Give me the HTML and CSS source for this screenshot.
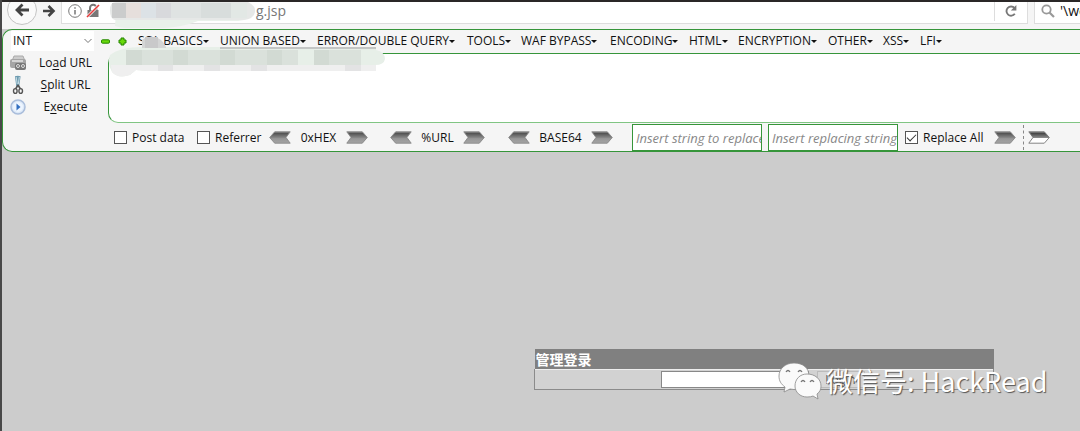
FILE: index.html
```html
<!DOCTYPE html>
<html lang="zh-CN">
<head>
<meta charset="utf-8">
<title>管理登录</title>
<link rel="stylesheet" href="styles.css">
</head>
<body>
<svg class="defs" width="0" height="0" aria-hidden="true">
  <defs>
    <linearGradient id="metal" x1="0" y1="0" x2="0" y2="1">
      <stop offset="0" stop-color="#8a8a8a"/><stop offset=".15" stop-color="#555"/><stop offset=".5" stop-color="#858585"/><stop offset=".6" stop-color="#979797"/><stop offset="1" stop-color="#a4a4a4"/>
    </linearGradient>
    <linearGradient id="half" x1="0" y1="0" x2="0" y2="1">
      <stop offset="0" stop-color="#888"/><stop offset=".15" stop-color="#484848"/><stop offset=".5" stop-color="#888"/><stop offset=".56" stop-color="#fff"/><stop offset="1" stop-color="#fff"/>
    </linearGradient>
    <symbol id="right" viewBox="0 0 22 13"><path d="M.8.8h15.5l5 5.700-5 5.700H.8l4.200-5.700z" fill="url(#metal)" stroke="#888" stroke-width=".9"/></symbol>
    <symbol id="left" viewBox="0 0 22 13"><path d="M21.200.8H5.700l-5 5.700 5 5.700h15.500L17 6.500z" fill="url(#metal)" stroke="#888" stroke-width=".9"/></symbol>
    <symbol id="right-half" viewBox="0 0 22 13"><path d="M.8.8h15.500l5 5.700-5 5.700H.8l4.200-5.700z" fill="url(#half)" stroke="#777" stroke-width=".9"/></symbol>
  </defs>
</svg>

<header class="browser">
  <nav class="nav">
    <button class="back" aria-label="Back"><svg width="16" height="16" viewBox="0 0 16 16"><path d="M15 8H3M8.500 2.500L3 8l5.500 5.500" fill="none" stroke="#444" stroke-width="2.800"/></svg></button>
    <button class="forward" aria-label="Forward"><svg width="14" height="14" viewBox="0 0 14 14"><path d="M1 7h10M6.500 2l5 5-5 5" fill="none" stroke="#444" stroke-width="2.600"/></svg></button>
    <div class="address">
      <svg class="info" width="14" height="14" viewBox="0 0 14 14"><circle cx="7" cy="7" r="6.300" fill="none" stroke="#777"/><path d="M7 6v4.500M7 3.300v1.500" stroke="#777" stroke-width="1.500"/></svg>
      <svg class="lock" width="14" height="16" viewBox="0 0 14 16"><path d="M4 8V5a3.200 3.200 0 0 1 6.400 0V8" fill="none" stroke="#777" stroke-width="2"/><path d="M1.500 7h11v7h-11z" fill="#777"/><path d="M1 14L13 2" stroke="#fff" stroke-width="3"/><path d="M1 14L13 2" stroke="#e33b3b" stroke-width="1.600"/></svg>
      <span class="url">g.jsp</span>
      <button class="reload" aria-label="Reload"><svg width="14" height="14" viewBox="0 0 14 14"><path d="M10.800 9.800A4.600 4.600 0 1 1 10.500 4" fill="none" stroke="#777" stroke-width="1.900"/><path d="M12.400 1v5.600H6.800z" fill="#777"/></svg></button>
    </div>
    <div class="search"><svg width="14" height="14" viewBox="0 0 14 14"><circle cx="5.500" cy="5.500" r="4.200" fill="none" stroke="#999" stroke-width="1.800"/><path d="M8.500 8.500l4.500 4.500" stroke="#999" stroke-width="2.200"/></svg><span>'\we</span></div>
  </nav>
  <svg class="mask-top" width="150" height="26" viewBox="0 0 150 26" aria-hidden="true">
    <path d="M8 10h138q-2 8-16 9H90q-20 8-45 7-25 2-38-2z" fill="#e9f1ea"/>
    <path d="M2 8Q2 0 8 0h132q8 4 7 10-1 7-12 8H7Q2 17 2 8" fill="#e6e8e7"/>
    <path d="M4 1h14v15H4z" fill="#cbcccc"/><path d="M18 1h15v15H18z" fill="#e6dfdc"/><path d="M33 1h15v15H33z" fill="#dce2e6"/><path d="M48 1h15v15H48z" fill="#d8d9dc"/><path d="M63 1h30v15H63z" fill="#dfe3e2"/><path d="M93 1h30v15H93z" fill="#d8dddc"/><path d="M123 1h16v15h-16z" fill="#e2e8e5"/>
  </svg>
</header>

<section class="hackbar">
  <div class="menubar">
    <select class="type" aria-label="Type"><option>INT</option></select>
    <svg class="chevron" width="8" height="6" viewBox="0 0 8 6"><path d="M.5 1L4 4.500 7.500 1" fill="none" stroke="#777"/></svg>
    <button class="minus" aria-label="Less"><svg width="9" height="9" viewBox="0 0 9 9"><rect x=".5" y="2.800" width="8" height="3.400" rx="1" fill="#68d80a" stroke="#248500"/></svg></button>
    <button class="plus" aria-label="More"><svg width="9" height="9" viewBox="0 0 9 9"><path d="M3 1h3v2h2v3H6v2H3V6H1V3h2z" fill="#68d80a" stroke="#248500" stroke-linejoin="round"/></svg></button>
    <div class="menus">
      <button>SQL BASICS</button><button>UNION BASED</button><button>ERROR/DOUBLE QUERY</button><button>TOOLS</button><button>WAF BYPASS</button><button>ENCODING</button><button>HTML</button><button>ENCRYPTION</button><button>OTHER</button><button>XSS</button><button>LFI</button>
    </div>
  </div>
  <div class="work">
    <div class="actions">
      <button><svg width="18" height="18" viewBox="0 0 18 18"><path d="M5 2h9l2 5H3z" fill="#ccc" stroke="#aaa"/><path d="M1 7q0-2 2-2h12q2 0 2 2v5q0 2-2 2H3q-2 0-2-2z" fill="#a5a5a5"/><path d="M3 6h11v2H3z" fill="#d5d5d5"/><rect x="6" y="9" width="11" height="7" rx="2" fill="#777"/><circle cx="9" cy="12" r="1.500" fill="none" stroke="#ddd"/><circle cx="14" cy="12" r="1.500" fill="none" stroke="#ddd"/></svg><span>Lo<u>a</u>d URL</span></button>
      <button><svg width="18" height="20" viewBox="0 0 18 20"><path d="M7.300 1l1.500 11M10.200 1L8.700 12" stroke="#6d9bb0" stroke-width="2.800"/><path d="M7.200 2l1 7M10.300 2l-1 7" stroke="#c4dbe4"/><path d="M9 10l-2.500 4M9 10l2.500 4" stroke="#555" stroke-width="1.500"/><ellipse cx="6.300" cy="16" rx="1.800" ry="2.400" fill="none" stroke="#555" stroke-width="1.400"/><ellipse cx="11.700" cy="16" rx="1.800" ry="2.400" fill="none" stroke="#555" stroke-width="1.400"/></svg><span><u>S</u>plit URL</span></button>
      <button><svg width="18" height="18" viewBox="0 0 18 18"><circle cx="9" cy="9" r="7" fill="#dce8f7" stroke="#a9bddb" stroke-width="1.500"/><circle cx="9" cy="9" r="5" fill="#edf5ff"/><path d="M7.500 5.500L11.500 9l-4 3.500z" fill="#326fc0"/></svg><span>E<u>x</u>ecute</span></button>
    </div>
    <div class="editor">
      <textarea aria-label="URL"></textarea>
      <div class="options">
        <label class="post"><input type="checkbox"><span>Post data</span></label>
        <label class="referrer"><input type="checkbox"><span>Referrer</span></label>
        <div class="codec hex"><button aria-label="Decode hex"><svg width="22" height="13"><use href="#left"/></svg></button><span>0xHEX</span><button aria-label="Encode hex"><svg width="22" height="13"><use href="#right"/></svg></button></div>
        <div class="codec pct"><button aria-label="Decode URL"><svg width="22" height="13"><use href="#left"/></svg></button><span>%URL</span><button aria-label="Encode URL"><svg width="22" height="13"><use href="#right"/></svg></button></div>
        <div class="codec base"><button aria-label="Decode Base64"><svg width="22" height="13"><use href="#left"/></svg></button><span>BASE64</span><button aria-label="Encode Base64"><svg width="22" height="13"><use href="#right"/></svg></button></div>
        <input class="field" type="text" placeholder="Insert string to replace" aria-label="String to replace">
        <input class="field" type="text" placeholder="Insert replacing string" aria-label="Replacing string">
        <label class="all"><input type="checkbox" checked><span>Replace All</span></label>
        <button class="run" aria-label="Replace"><svg width="22" height="13"><use href="#right"/></svg></button>
        <button class="run next" aria-label="Replace next"><svg width="22" height="13"><use href="#right-half"/></svg></button>
      </div>
    </div>
  </div>
  <svg class="mask-url" width="280" height="42" viewBox="0 0 280 42" aria-hidden="true">
    <path d="M2 19Q12 11 34 11h234v3q9 2 9 9-1 6-10 6v6H38L28 34l-6 5q-12 4-18-3-5-9-2-17" fill="#e7efe8"/>
    <path d="M3 29h265v6H38L28 34l-6 5q-12 4-18-3z" fill="#efefef"/>
    <path d="M34 12V4q5-4 12-3 8 1 12 10v1z" fill="#d4d5d5"/><path d="M37 1h13v11H37z" fill="#c9c9ca"/><path d="M112 11h156v2H112z" fill="#c4c6c5"/>
    <path d="M18 14h16v15H18zM65 14h15v15H65zM112 14h15v15h-15zM159 14h15v15h-15zM206 14h15v15h-15z" fill="#d2dad3"/><path d="M34 14h31v15H34zM80 14h32v15H80zM127 14h32v15h-32zM174 14h16v15h-16zM221 14h32v15h-32z" fill="#dae1db"/>
    <path d="M50 29h15v6H50zM96 29h16v6H96zM143 29h16v6h-16zM237 29h16v6h-16z" fill="#e3e3e4"/>
  </svg>
</section>

<main class="page">
  <form class="login">
    <table>
      <thead><tr><th colspan="2">管理登录</th></tr></thead>
      <tbody><tr><td class="empty"></td><td class="entry"><div><input type="password" aria-label="密码"><button type="button">Login</button></div></td></tr></tbody>
    </table>
    <div class="watermark">
      <svg width="44" height="38" viewBox="0 0 44 38"><g fill="#fafafa" stroke="#888" stroke-width=".8"><path d="M16 1C7 1 1 7 1 14c0 5 2 8 6 11l-1 5 6-3q4 1 8 0c7-1 11-6 11-13C31 6 25 1 16 1z"/><path d="M29 12c-7 0-12 5-12 12 0 6 5 11 12 11q4 0 6-1l5 3-1-5c3-2 4-5 4-8 0-7-6-12-14-12z"/></g><g fill="none" stroke="#777" stroke-width="1.300"><path d="M8 10q2-3 4 0M20 10q2-3 4 0M23 20q2-3 4 0M32 20q2-3 4 0"/></g></svg>
      <span>微信号: HackRead</span>
    </div>
  </form>
</main>
</body>
</html>
```
FILE: styles.css
```css
* { box-sizing: border-box; }
body {
  margin: 0;
  min-height: 100vh;
  display: flex;
  flex-direction: column;
  border-left: 2px solid #484848;
  background: #ccc;
  color: #111;
  font: 12px/16px "Open Sans", "Noto Sans", "Noto Sans CJK SC", sans-serif;
  overflow-x: hidden;
}
button, input, select, textarea { font: inherit; color: inherit; }
button { padding: 0; border: 0; background: none; }
svg { display: block; flex: none; }
.defs { position: absolute; }

.browser {
  position: relative;
  border-top: 2px solid #2a2727;
  background: #f5f5f5;
  height: 29px;
  overflow: hidden;
}
.nav { display: flex; height: 22px; }
.nav > * { flex: none; }
.back {
  width: 30px;
  height: 30px;
  margin: -7px 0 0 5px;
  border: 1px solid #c4c4c4;
  border-radius: 50%;
  display: grid;
  place-items: center;
  background: #fafafa;
}
.forward { width: 24px; display: grid; place-items: center; padding-bottom: 4px; }
.nav .address {
  flex: 1;
  display: flex;
  align-items: center;
  gap: 4px;
  padding: 0 0 4px 6px;
  background: #fff;
  border: solid #ddd;
  border-width: 0 1px 1px;
}
.url { margin-left: 152px; font-size: 14px; line-height: 18px; color: #777; }
.reload { width: 33px; height: 20px; margin-left: auto; display: grid; place-items: center; border-left: 1px solid #ddd; }
.search {
  width: 46px;
  margin-left: 6px;
  padding: 0 0 4px 6px;
  display: flex;
  align-items: center;
  gap: 5px;
  overflow: hidden;
  background: #fff;
  border: solid #ddd;
  border-width: 0 0 1px 1px;
  font-size: 14px;
}
.mask-top { position: absolute; left: 106px; top: 0; }

.hackbar {
  position: relative;
  background: #f5f5f5;
  border: solid #36953a;
  border-width: 1px 0 1px 1px;
  border-radius: 10px 0 0 10px;
}
.menubar { display: flex; align-items: center; height: 23px; padding-bottom: 1px; }
.type {
  width: 83px;
  height: 20px;
  margin-left: 8px;
  padding: 0 2px;
  border: 0;
  background: #fff;
  appearance: none;
}
.chevron { margin-left: -10px; pointer-events: none; }
.minus { margin-left: 9px; }
.plus { margin-left: 8px; }
.menus {
  display: grid;
  grid-template-columns: 82px 97px 150px 54px 89px 79px 49px 90px 55px 37px auto;
  margin-left: 11px;
}
.menus button { display: flex; align-items: center; white-space: nowrap; }
.menus button::after { content: ""; border: 3px solid transparent; border-top-color: #111; border-bottom: 0; }

.work { display: flex; }
.actions { width: 105px; flex: none; margin-top: -1px; }
.actions button { display: flex; align-items: center; width: 100%; height: 22px; padding-left: 6px; }
.actions span { flex: 1; text-align: center; padding-right: 4px; }
.actions u { text-underline-offset: 2px; }
.editor { flex: 1; min-width: 0; }
textarea {
  display: block;
  width: 100%;
  height: 70px;
  resize: none;
  background: #fff;
  border: 1px solid #36953a;
  border-bottom-color: #80c583;
  border-right: 0;
  border-radius: 10px 0 0 10px;
  outline: 0;
}
.options { display: flex; align-items: center; height: 28px; padding: 1px 0 0 6px; white-space: nowrap; }
.options > * { flex: none; }
.options label { display: flex; align-items: center; gap: 5px; }
.options input[type=checkbox] {
  appearance: none;
  width: 13px;
  height: 13px;
  margin: 0;
  border: 1px solid #555;
  background: #fff;
  display: grid;
  place-items: center;
}
.options input[type=checkbox]:checked::after {
  content: "";
  width: 8px;
  height: 4px;
  margin-bottom: 2px;
  border: solid #333;
  border-width: 0 0 1px 1px;
  transform: rotate(-45deg);
}
.post { width: 83px; }
.referrer { width: 72px; }
.codec { display: flex; align-items: center; justify-content: space-between; }
.hex { width: 99px; }
.pct { width: 95px; margin-left: 22px; }
.base { width: 105px; margin-left: 23px; }
.field {
  width: 130px;
  height: 27px;
  padding: 0 0 0 3px;
  border: 1px solid #36953a;
  background: #fff;
  margin-left: 6px;
  font-size: 13px;
}
.base + .field { margin-left: 19px; }
.field::placeholder { color: #888; opacity: 1; font-style: italic; }
.all { width: 89px; margin-left: 7px; }
.run.next { margin-left: 7px; padding: 6px 0 6px 4px; border-left: 1px dashed #888; }
.mask-url { position: absolute; left: 105px; top: 6px; }

.page { flex: 1; display: flex; align-items: flex-start; padding: 197px 0 0 532px; }
.login { position: relative; width: 460px; }
table { width: 100%; border-collapse: collapse; }
th {
  height: 20px;
  padding: 1px 1px 0;
  background: #808080;
  color: #fff;
  font: bold 14px/18px "Noto Sans CJK SC", sans-serif;
  text-align: left;
}
td { padding: 0; height: 20px; background: #d2d2d2; border: solid #8b8b8b; border-width: 1px 0; border-top-color: #eee; }
.empty { width: 126px; border-left-width: 1px; }
.entry { border-right-width: 1px; }
.entry div { display: flex; align-items: center; gap: 8px; }
.entry input { width: 148px; height: 17px; padding: 0 2px; border: 1px solid #888; background: #fff; }
.entry button { width: 48px; height: 17px; line-height: 15px; border: 1px solid #bbb; background: #d8d8d8; color: #555; }
.watermark { position: absolute; left: 244px; top: 13px; display: flex; align-items: center; gap: 4px; white-space: nowrap; }
.watermark span { color: #fff; font: 27px/36px "Noto Sans CJK SC", sans-serif; text-shadow: 1px 1px 1px #555; }
```
